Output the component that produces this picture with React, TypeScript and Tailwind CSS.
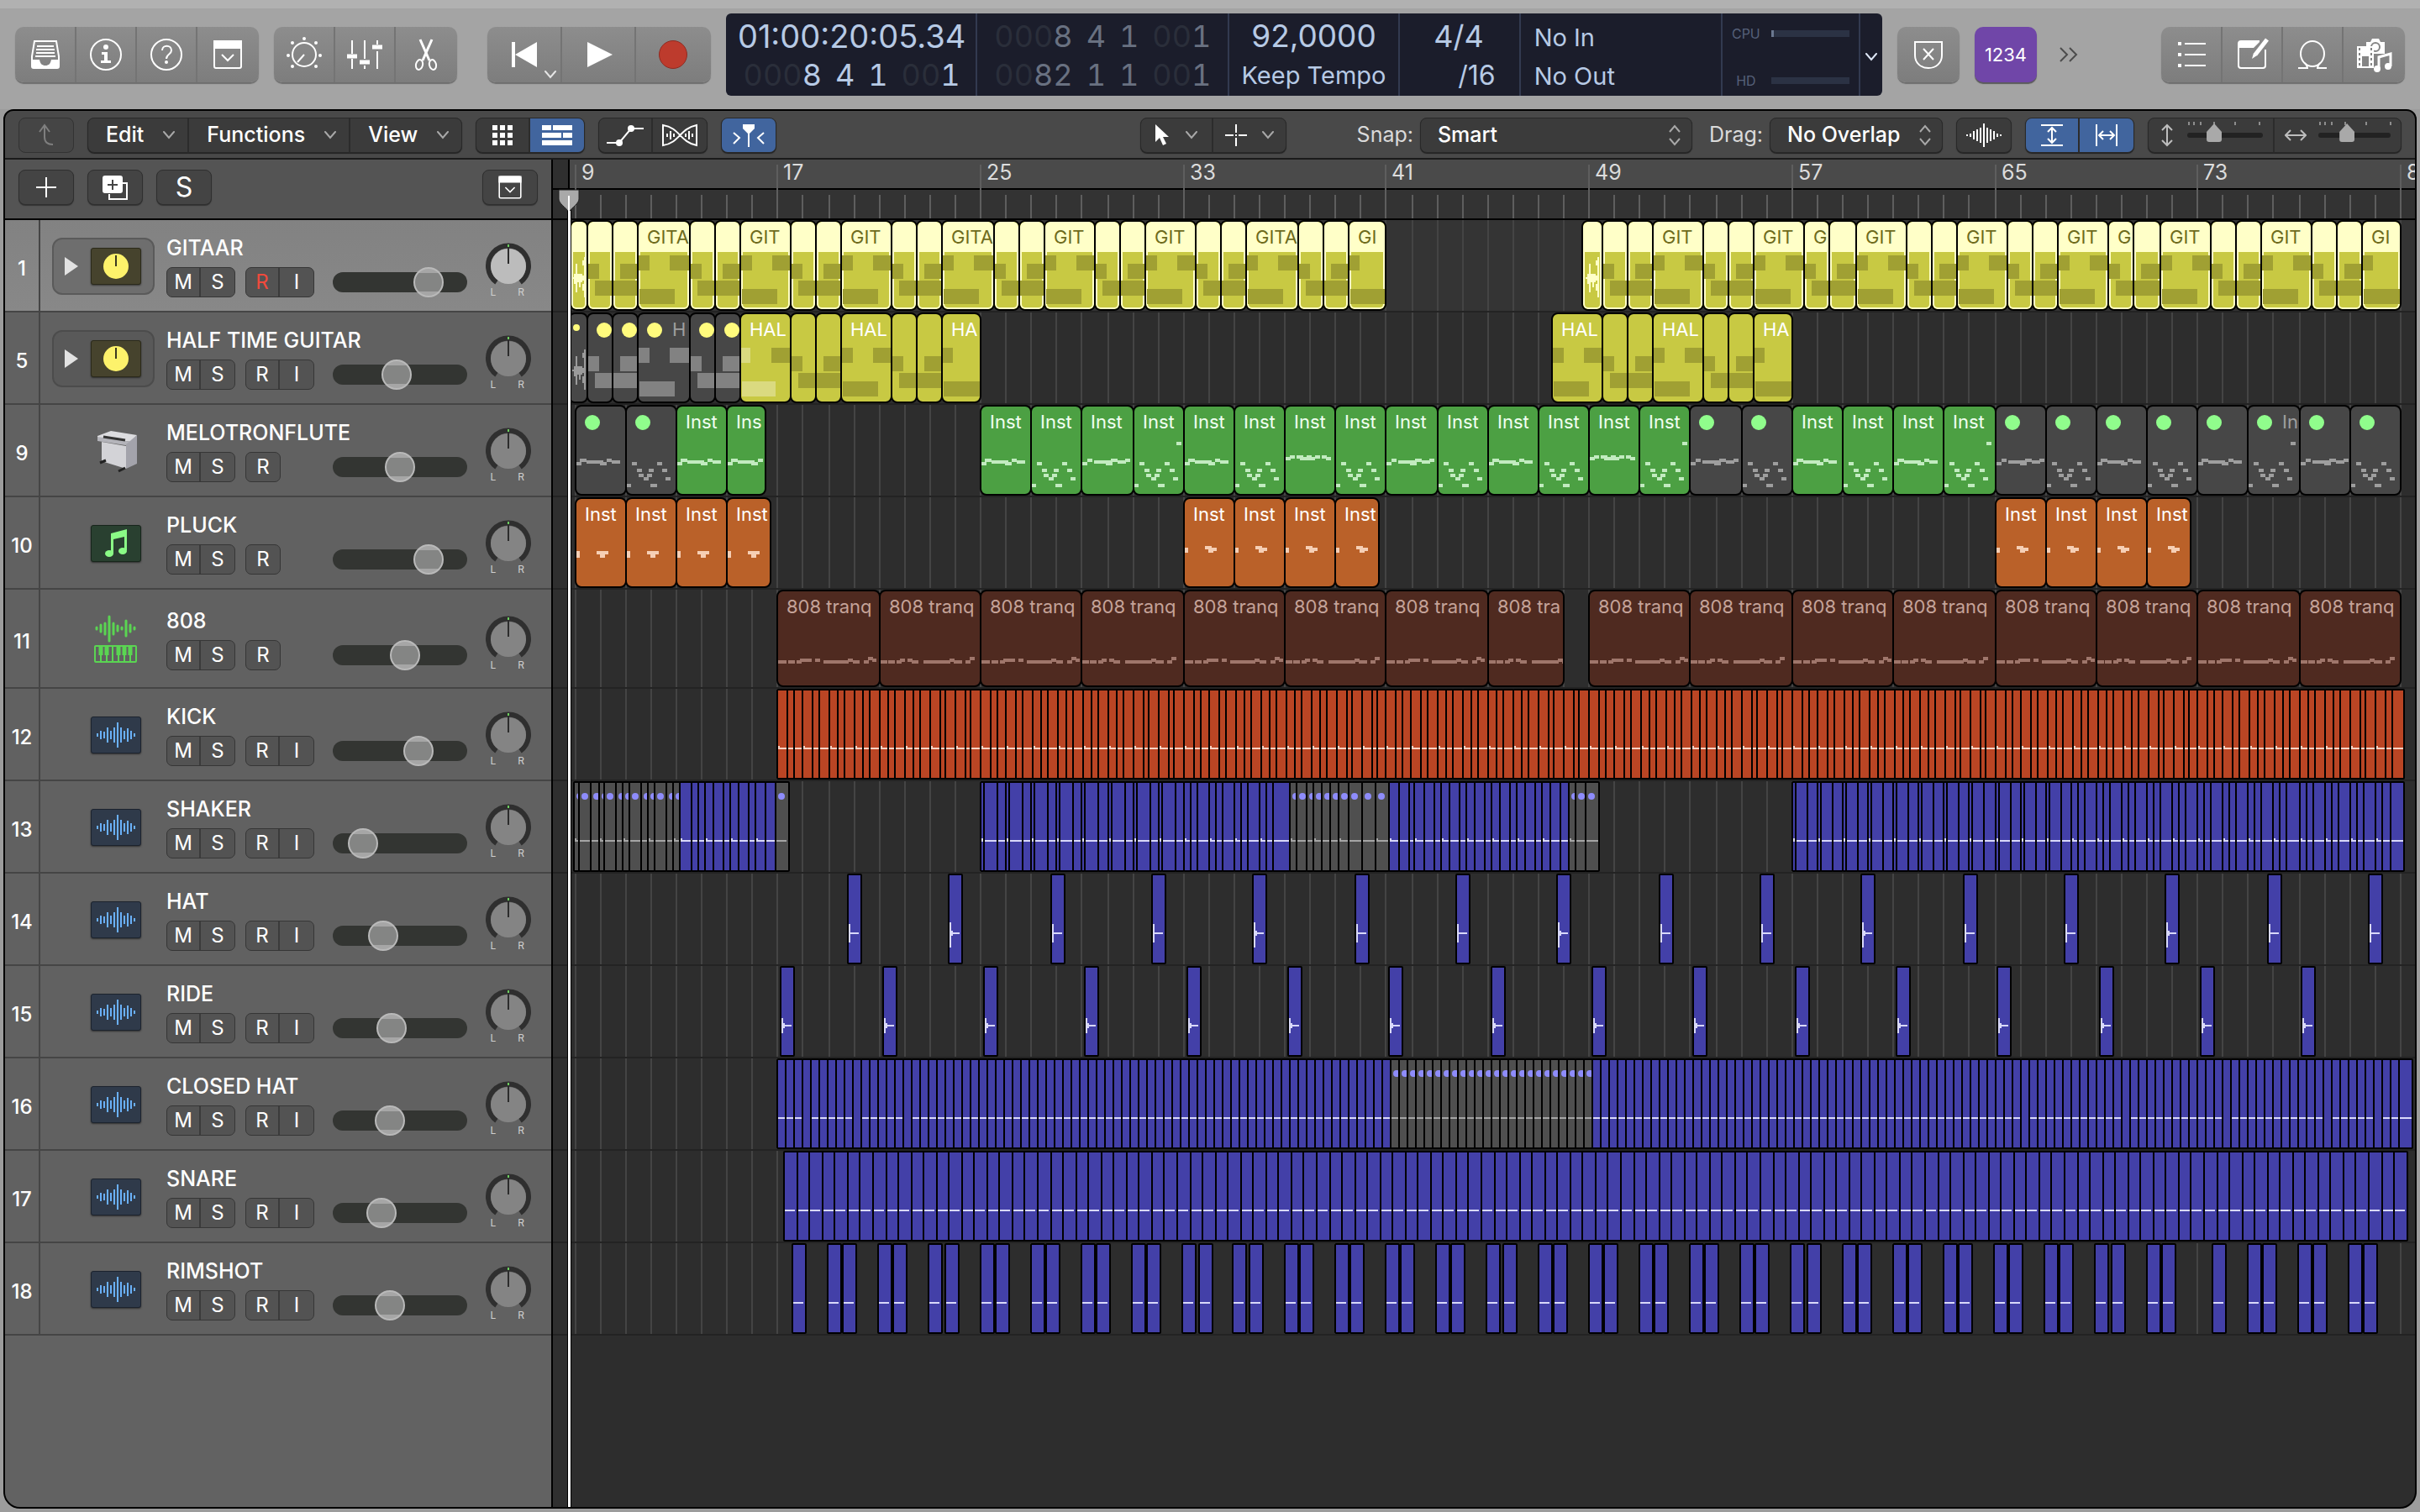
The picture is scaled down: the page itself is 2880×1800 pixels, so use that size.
import type { CSSProperties, ReactNode } from 'react'
import { clsx } from 'clsx'

type Note = [x: number, y: number, w: number, h: number]
type Tone = 'selected' | 'yellow' | 'green' | 'orange' | 'brown' | 'muted'
type Clip = { from: number; to: number; tone: Tone; label?: string; dot?: string; smallDot?: boolean; notes: Note[]; noteColor: string }
type SliceTone = 'red' | 'blue' | 'gray'
type Slice = { x: number; end: number; tone: SliceTone; wave?: 'line' | 'short' | 'hat' | 'hatTall' | 'ride' | 'none'; hit?: boolean }

const BAR = 30.172

// bar number -> x in the lane, snapped to the 2px grid
const px = (bar: number) => 2 * Math.round((5.41 + (bar - 9) * BAR) / 2)
const range = (n: number) => Array.from({ length: n }, (_, i) => i)

const END = 9999

/* ---------- clips ---------- */

const RIFF: Note[][] = [
  [[1, 52, 13, 18], [9, 72, END, 18]],
  [[9, 52, END, 18], [0, 72, END, 18]],
  [[1, 42, 13, 18], [38, 42, END, 18], [2, 82, 42, 18]],
]
const RIFF_END: Note[] = [[1, 42, 12, 18], [2, 82, END, 18]]
const AUDIO: Note[] = [
  [0, 68, 16, 2], [4, 52, 2, 34], [2, 64, 4, 12], [6, 64, 6, 10], [8, 72, 2, 8], [12, 66, 2, 6], [14, 44, 2, 48], [12, 48, 2, 6], [12, 76, 2, 8],
]

function riff(from: number, to: number, tone: Tone, noteColor: string, labels: Record<number, string>, dot?: string): Clip[] {
  const out: Clip[] = []
  const steps = [1, 1, 2]
  let bar = from
  let i = Math.abs(from % 4 - 3.5) < 0.1 ? 2 : 0
  while (bar < to) {
    const end = Math.min(bar + steps[i % 3], to)
    const cut = steps[i % 3] === 2 && end - bar < 2
    out.push({ from: bar, to: end, tone, label: labels[bar], noteColor, notes: cut ? RIFF_END : RIFF[i % 3], dot })
    bar = end
    i++
  }
  return out
}

const OLIVE = '#a0a033'
const GITAAR: Clip[] = [
  { from: 8.8, to: 9.5, tone: 'selected', notes: AUDIO.map(([x, y, w, h]) => [x + 2, y, w, h] as Note), noteColor: '#ffffc8' },
  ...riff(9.5, 41, 'selected', OLIVE, { 11.5: 'GITA', 15.5: 'GIT', 19.5: 'GIT', 23.5: 'GITA', 27.5: 'GIT', 31.5: 'GIT', 35.5: 'GITA', 39.5: 'GI' }),
  { from: 48.75, to: 49.5, tone: 'selected', notes: AUDIO.map(([x, y, w, h]) => [x + 4, y, w, h] as Note), noteColor: '#ffffc8' },
  ...riff(49.5, 81, 'selected', OLIVE, {
    51.5: 'GIT', 55.5: 'GIT', 57.5: 'G', 59.5: 'GIT', 63.5: 'GIT', 67.5: 'GIT', 69.5: 'G', 71.5: 'GIT', 75.5: 'GIT', 79.5: 'GI',
  }),
]

const HALF_TIME: Clip[] = [
  { from: 8.74, to: 9.5, tone: 'muted', notes: AUDIO.map(([x, y, w, h]) => [x + 4, y, w, h] as Note), noteColor: '#9b9b9b', dot: '#fffb7d', smallDot: true },
  ...riff(9.5, 15.5, 'muted', '#828282', { 11.5: 'H' }, '#fffb7d'),
  { from: 15.5, to: 17.5, tone: 'yellow', label: 'HAL', notes: [[1, 42, 11, 18], [2, 82, 40, 18]], noteColor: '#dada80' },
  ...riff(17.5, 25, 'yellow', OLIVE, { 19.5: 'HAL', 23.5: 'HA' }),
  ...riff(47.5, 57, 'yellow', OLIVE, { 47.5: 'HAL', 51.5: 'HAL', 55.5: 'HA' }),
]

const LINE: Note[] = [[1, 68, 6, 4], [5, 64, 8, 4], [13, 66, 20, 4], [29, 68, 8, 4], [37, 64, 6, 4], [43, 66, 10, 4]]
const LINE_UP: Note[] = [[1, 68, 6, 4], [7, 64, 6, 4], [15, 66, 20, 4], [29, 68, 8, 4], [35, 64, 8, 4], [43, 66, 10, 4], [52, 64, 6, 4]]
const HIGH: Note[] = [[1, 62, 6, 4], [6, 60, 6, 4], [14, 60, 8, 4], [18, 62, 18, 4], [26, 60, 6, 4], [36, 60, 6, 4], [44, 60, 6, 4], [49, 62, 6, 4]]
const SCATTER: Note[] = [
  [1, 94, 5, 4], [7, 68, 6, 4], [13, 76, 6, 4], [15, 82, 6, 4], [21, 86, 6, 4], [25, 82, 6, 4], [27, 76, 6, 4], [29, 94, 8, 4], [37, 68, 6, 4], [43, 76, 6, 4], [47, 86, 6, 4],
]
const SCATTER_TOP: Note[] = [...SCATTER, [51, 44, 6, 4]]

function flute(bar: number): Clip {
  const muted = bar < 13 || bar === 53 || bar === 55 || bar >= 65
  const odd = (bar - 9) % 4 === 2 && bar !== 15
  let notes = odd ? SCATTER : LINE
  if (bar === 31 || bar === 51 || bar === 63 || bar === 75) notes = SCATTER_TOP
  if (bar === 37 || bar === 49) notes = HIGH
  if (bar === 29 || bar === 41 || bar === 53 || bar === 65 || bar === 77) notes = LINE_UP
  if (bar === 15) notes = LINE.slice(0, 5)
  return {
    from: bar,
    to: bar === 15 ? 16.5 : bar + 2,
    tone: muted ? 'muted' : 'green',
    label: muted ? (bar === 75 ? 'In' : undefined) : bar === 15 ? 'Ins' : 'Inst',
    dot: muted ? '#90fd8c' : undefined,
    notes,
    noteColor: muted ? '#9e9e9e' : '#c2ebc0',
  }
}
const FLUTE: Clip[] = [9, 11, 13, 15, ...range(28).map((i) => 25 + i * 2)].map(flute)

const PLUCK_LOW: Note[] = [[1, 64, 4, 8], [25, 64, 14, 4], [29, 68, 6, 4]]
const PLUCK_HIGH: Note[] = [[1, 60, 4, 6], [25, 58, 8, 4], [29, 60, 10, 4], [29, 62, 6, 4]]
const PLUCK: Clip[] = [9, 33, 65].flatMap((start) =>
  range(4).map((i): Clip => ({
    from: start + i * 2,
    to: start + i * 2 + (i === 3 ? 1.7 : 2),
    tone: 'orange',
    label: 'Inst',
    notes: start === 9 ? PLUCK_LOW : PLUCK_HIGH,
    noteColor: '#f6cfb5',
  })),
)

const BASS_A: Note[] = [
  [1, 84, 10, 4], [13, 84, 8, 4], [23, 84, 6, 4], [27, 82, 14, 4], [45, 82, 6, 4], [55, 84, 30, 4], [84, 82, 6, 4], [90, 84, 8, 4], [103, 84, 6, 4], [108, 80, 6, 4], [113, 82, 5, 4],
]
const BASS_B: Note[] = [
  [1, 84, 8, 4], [10, 84, 8, 4], [20, 84, 6, 4], [24, 82, 6, 4], [33, 82, 6, 4], [38, 84, 8, 4], [52, 84, 32, 4], [83, 82, 6, 4], [88, 84, 10, 4], [102, 84, 6, 4], [107, 80, 6, 4],
]
const BASS: Clip[] = range(16).map((i) => ({
  from: 17 + i * 4,
  to: i === 7 ? 48 : 21 + i * 4,
  tone: 'brown',
  label: i === 7 ? '808 tra' : '808 tranq',
  notes: i % 2 ? BASS_B : BASS_A,
  noteColor: '#9f766b',
}))

/* ---------- one-shot slices ---------- */

const chain = (edges: number[], tone: SliceTone, wave: Slice['wave'] = 'line'): Slice[] =>
  edges.slice(0, -1).map((x, i) => ({ x, end: edges[i + 1], tone, wave, hit: i % 3 === 0 }))

const KICK_STEPS = [0, 12, 20, 30, 42, 50, 62, 72, 80, 92, 102, 110, 122, 132, 140, 152, 162, 170, 182, 194, 200, 212, 224, 230]
const LANE_END = 2182
const KICK = chain(
  [...range(8).flatMap((k) => KICK_STEPS.map((s) => px(17 + k * 8) + s)), px(81) - 10].filter((x, i, a) => i === a.length - 1 || x < px(81) - 16).concat(LANE_END),
  'red',
)

const bars = (from: number, to: number, steps: number[]) => range(to - from).flatMap((i) => steps.map((s) => px(from + i) + s))
const SHAKER: Slice[] = [
  ...chain([4, 10, 24, 34, 40, 54, 62, 70, 84, 92, 100, 114, 122, 130], 'gray'),
  ...chain([130, 144, 152, 160, 170, 182, 190, 200, 212, 220, 232, 244], 'blue'),
  ...chain([244, 260], 'gray', 'short'),
  ...chain([...bars(25, 33, [0, 4, 20]), ...bars(33, 37, [0, 8, 16]), 856], 'blue'),
  ...chain([856, 864, 876, 884, 894, 904, 914, 926, 942, 958, 974], 'gray'),
  ...chain([974, 986, 998, 1004, 1016, 1028, 1036, 1046, 1058, 1066, 1076, 1088, 1096, 1106, 1118, 1126, 1136, 1148, 1156, 1166, 1178, 1188], 'blue'),
  ...chain([1188, 1196, 1208, 1224], 'gray'),
  ...chain([...bars(57, 68, [0, 4, 18]), ...bars(68, 80, [0, 8, 16]), px(80), px(80) + 8, LANE_END - 16, LANE_END], 'blue'),
]

const HAT: Slice[] = range(16).map((k) => ({ x: px(19.75 + k * 4), end: px(19.75 + k * 4) + 16, tone: 'blue', wave: k % 3 === 1 ? 'hatTall' : 'hat' }))
const RIDE: Slice[] = range(16).map((k) => ({ x: px(17.125 + k * 4), end: px(17.125 + k * 4) + 16, tone: 'blue', wave: 'ride' }))

const SILENT = [3, 9, 15, 148, 160, 172, 184, 190]
const CLOSED_HAT: Slice[] = range(194).map((n) => ({
  x: 246 + n * 10,
  end: n === 193 ? 2192 : 256 + n * 10,
  tone: n >= 73 && n < 97 ? 'gray' : 'blue',
  wave: SILENT.includes(n) ? 'none' : 'line',
}))

const SNARE: Slice[] = range(128).map((k) => {
  const bar = 17.25 + k / 2
  return { x: px(bar), end: k === 127 ? px(bar) + 16 : px(bar + 0.5), tone: 'blue', wave: 'short' }
})

const RIM_BARS = [17.58, ...range(31).flatMap((k) => (19 + k * 2 === 73 ? [73.58] : [18.97 + k * 2, 19.58 + k * 2]))]
const RIMSHOT: Slice[] = RIM_BARS.map((b) => ({ x: px(b), end: px(b) + 16, tone: 'blue', wave: 'short' }))

/* ---------- tracks ---------- */

type Track = { no: number; name: string; icon: 'stack' | 'flute' | 'note' | 'sampler' | 'audio'; volume: number; input?: boolean; clips?: Clip[]; slices?: Slice[] }

const TRACKS: Track[] = [
  { no: 1, name: 'GITAAR', icon: 'stack', volume: 96, input: true, clips: GITAAR },
  { no: 5, name: 'HALF TIME GUITAR', icon: 'stack', volume: 58, input: true, clips: HALF_TIME },
  { no: 9, name: 'MELOTRONFLUTE', icon: 'flute', volume: 62, clips: FLUTE },
  { no: 10, name: 'PLUCK', icon: 'note', volume: 96, clips: PLUCK },
  { no: 11, name: '808', icon: 'sampler', volume: 68, clips: BASS },
  { no: 12, name: 'KICK', icon: 'audio', volume: 84, input: true, slices: KICK },
  { no: 13, name: 'SHAKER', icon: 'audio', volume: 18, input: true, slices: SHAKER },
  { no: 14, name: 'HAT', icon: 'audio', volume: 42, input: true, slices: HAT },
  { no: 15, name: 'RIDE', icon: 'audio', volume: 52, input: true, slices: RIDE },
  { no: 16, name: 'CLOSED HAT', icon: 'audio', volume: 50, input: true, slices: CLOSED_HAT },
  { no: 17, name: 'SNARE', icon: 'audio', volume: 40, input: true, slices: SNARE },
  { no: 18, name: 'RIMSHOT', icon: 'audio', volume: 50, input: true, slices: RIMSHOT },
]

const rowHeight = (t: Track) => (t.icon === 'sampler' ? 'h-[118px]' : 'h-[110px]')

/* ---------- icons ---------- */

function Icon({ children, size = 40, className }: { children: ReactNode; size?: number; className?: string }) {
  return (
    <svg width={size} height={size} viewBox={`0 0 ${size} ${size}`} fill="none" stroke="currentColor" strokeWidth="2" className={className} aria-hidden="true">
      {children}
    </svg>
  )
}

const Chevron = ({ className }: { className?: string }) => (
  <svg width="16" height="10" viewBox="0 0 16 10" fill="none" stroke="currentColor" strokeWidth="2" strokeLinecap="round" className={className} aria-hidden="true">
    <path d="M2 1l6 7 6-7" />
  </svg>
)

const UpDown = () => (
  <svg width="14" height="26" viewBox="0 0 14 26" fill="none" stroke="#a8a8a8" strokeWidth="2" className="pointer-events-none absolute right-[14px] top-[8px]" aria-hidden="true">
    <path d="M1 9l6-7 6 7M1 17l6 7 6-7" />
  </svg>
)

const TrayIcon = () => (
  <Icon>
    <path d="M7 4H33L36 22V34a2 2 0 0 1-2 2H6a2 2 0 0 1-2-2V22Z" />
    <path d="M10 10h20M9 14h22M9 18h22M8 22h24" />
    <path d="M4 26h9c1 5 3 7 7 7s6-2 7-7h9v9H4Z" fill="currentColor" stroke="none" />
  </Icon>
)
const InfoIcon = () => (
  <Icon>
    <circle cx="20" cy="20" r="18" />
    <circle cx="20" cy="11" r="3" fill="currentColor" stroke="none" />
    <path d="M15 17h7v10h4v3H14v-3h4v-7h-3Z" fill="currentColor" stroke="none" />
  </Icon>
)
const HelpIcon = () => (
  <Icon>
    <circle cx="20" cy="20" r="18" />
    <path d="M15 15c0-7 11-7 11 0 0 5-6 4-6 10" />
    <circle cx="20" cy="29" r="2" fill="currentColor" stroke="none" />
  </Icon>
)
const PanelIcon = ({ size = 40 }: { size?: number }) => (
  <svg width={size} height={size} viewBox="0 0 40 40" fill="none" stroke="currentColor" strokeWidth="2" aria-hidden="true">
    <rect x="4" y="4" width="32" height="32" rx="2" />
    <path d="M4 4h32v8H4Z" fill="currentColor" />
    <path d="M13 20l7 7 7-7" />
  </svg>
)
const DialIcon = () => (
  <Icon size={44}>
    <circle cx="22" cy="22" r="14" />
    <path d="M22 22l-8 9" />
    <g fill="currentColor" stroke="none">
      <circle cx="22" cy="3" r="2" /><circle cx="8" cy="8" r="2" /><circle cx="36" cy="8" r="2" /><circle cx="3" cy="23" r="2" />
      <circle cx="41" cy="23" r="2" /><circle cx="8" cy="36" r="2" /><circle cx="36" cy="36" r="2" />
    </g>
  </Icon>
)
const MixerIcon = () => (
  <Icon size={44}>
    <path d="M7 5v16M7 27v12M22 5v22M22 35v4M37 5v5M37 18v21" />
    <path d="M1 24h12M16 31h12M31 13h12" strokeWidth="5" />
  </Icon>
)
const ScissorsIcon = () => (
  <Icon>
    <path d="M13 2l11 25M27 2L16 27" strokeWidth="3" />
    <ellipse cx="12" cy="32" rx="4" ry="6" transform="rotate(14 12 32)" />
    <ellipse cx="28" cy="32" rx="4" ry="6" transform="rotate(-14 28 32)" />
  </Icon>
)
const WaveIcon = ({ color, bars: heights, gap = 4 }: { color: string; bars: number[]; gap?: number }) => (
  <svg width={heights.length * gap} height="34" viewBox={`0 0 ${heights.length * gap} 34`} stroke={color} strokeWidth="2" aria-hidden="true">
    {heights.map((h, i) => (
      <path key={i} d={`M${i * gap + gap / 2} ${17 - h / 2}v${h}`} />
    ))}
  </svg>
)

function TrackIcon({ kind }: { kind: Track['icon'] }) {
  if (kind === 'stack')
    return (
      <span className="flex h-[44px] w-[60px] items-center justify-center rounded-[3px] border border-[#2b2a1a] bg-[#46432d] shadow-[0_1px_2px_rgba(0,0,0,0.5)]">
        <svg width="30" height="30" viewBox="0 0 30 30" aria-hidden="true">
          <circle cx="15" cy="15" r="15" fill="#fdf26b" />
          <path d="M15 2v13" stroke="#3b3820" strokeWidth="2" />
        </svg>
      </span>
    )
  if (kind === 'note')
    return (
      <span className="flex h-[44px] w-[60px] items-center justify-center rounded-[3px] border border-[#17251b] bg-[#294030] shadow-[0_1px_2px_rgba(0,0,0,0.5)]">
        <svg width="28" height="36" viewBox="0 0 28 36" fill="#8afa86" aria-hidden="true">
          <path d="M8 6L27 1V26H24V10L11 13V30H8Z" />
          <ellipse cx="6" cy="30" rx="5" ry="4" />
          <ellipse cx="22" cy="27" rx="5" ry="4" />
        </svg>
      </span>
    )
  if (kind === 'audio')
    return (
      <span className="flex h-[44px] w-[60px] items-center justify-center rounded-[3px] border border-[#1c232e] bg-[#2f3a4a] shadow-[0_1px_2px_rgba(0,0,0,0.5)]">
        <WaveIcon color="#6ab0f8" bars={[4, 10, 8, 18, 10, 18, 30, 18, 10, 16, 10, 4]} />
      </span>
    )
  if (kind === 'sampler')
    return (
      <svg width="60" height="58" viewBox="0 0 60 58" aria-hidden="true">
        <g stroke="#5ad552" strokeWidth="3" strokeLinecap="round">
          <path d="M7 15v2M12 12v8M17 10v13M22 2v29M27 10v13M32 13v6M37 15v2M42 7v18M47 12v8M52 15v2" />
        </g>
        <rect x="5" y="37" width="49" height="19" rx="1" fill="none" stroke="#5ad552" strokeWidth="2" />
        <path d="M12 37v19M19 37v19M26 37v19M33 37v19M40 37v19M47 37v19" stroke="#5ad552" strokeWidth="2" />
        <path d="M12 37v11M19 37v11M33 37v11M40 37v11M47 37v11" stroke="#5ad552" strokeWidth="5" />
      </svg>
    )
  return (
    <svg width="60" height="56" viewBox="0 0 60 56" aria-hidden="true">
      <path d="M8 10L24 4 55 9 48 17 8 12Z" fill="#dcdcdf" />
      <path d="M8 11L48 17V22L8 16Z" fill="#b4b4ba" />
      <path d="M15 11l26 4" stroke="#333" strokeWidth="3" />
      <path d="M13 17L42 22V49L13 40Z" fill="#d3d3d7" />
      <path d="M42 20L55 9V43L42 49Z" fill="#a3a3ab" />
      <path d="M11 42l7-3M33 52l8-4" stroke="#222" strokeWidth="3" />
    </svg>
  )
}

/* ---------- control bar ---------- */

function Group({ children }: { children: ReactNode }) {
  return <div className="flex h-[66px] shrink-0 divide-x-2 divide-[#747474] overflow-hidden rounded-[10px] bg-linear-to-b from-[#8d8d8d] to-[#7d7d7d] px-px shadow-[0_2px_1px_#6e6e6e]">{children}</div>
}

function BarButton({ label, wide, children }: { label: string; wide?: boolean; children: ReactNode }) {
  return (
    <button type="button" aria-label={label} className={clsx('relative flex h-full items-center justify-center text-white', wide ? 'w-[88px]' : 'w-[72px]')}>
      {children}
    </button>
  )
}

function Locator({ bars: b, bright }: { bars: [string, string]; bright?: boolean }) {
  return (
    <div className={clsx('flex w-[258px] justify-between text-[36px] leading-[46px] tabular-nums', bright ? 'text-[#b7cae5]' : 'text-[#697181]')}>
      <span><span className="text-[#2a2e3a]">{b[0]}</span>{b[1]}</span>
      <span>{bright || b[0] === '000' ? '4' : '1'}</span>
      <span>1</span>
      <span><span className="text-[#2a2e3a]">00</span>1</span>
    </div>
  )
}

function Meter({ name, level }: { name: string; level?: boolean }) {
  return (
    <div className="flex items-center gap-[12px] text-[16px] leading-[24px] text-[#56617a]">
      <span className="w-[36px] text-center">{name}</span>
      <span className="h-[8px] flex-1 bg-[#2b3244]">{level && <span className="block h-full w-[3px] bg-[#6b7890]" />}</span>
    </div>
  )
}

function Display() {
  return (
    <section aria-label="LCD" className="grid h-[98px] flex-1 grid-cols-[299fr_300fr_202fr_144fr_240fr_164fr_26fr] divide-x-2 divide-[#323a50] overflow-hidden rounded-[6px] bg-[#1b1d2b] whitespace-nowrap text-[#b7cae5]">
      <div className="flex flex-col items-center py-[4px] pl-[2px]">
        <div className="text-[38px] leading-[46px]">01:00:20:05.34</div>
        <Locator bars={['000', '8']} bright />
      </div>
      <div className="flex flex-col items-center py-[4px]">
        <Locator bars={['000', '8']} />
        <Locator bars={['00', '82']} />
      </div>
      <div className="flex flex-col items-center py-[4px]">
        <div className="text-[37px] leading-[46px]">92,0000</div>
        <div className="text-[29px] leading-[48px]">Keep Tempo</div>
      </div>
      <div className="flex flex-col items-end py-[4px] pr-[28px]">
        <div className="pr-[14px] text-[36px] leading-[46px]">4/4</div>
        <div className="text-[32px] leading-[48px]">/16</div>
      </div>
      <div className="flex flex-col py-[6px] pl-[16px] text-[29px] leading-[46px]">
        <div>No In</div>
        <div>No Out</div>
      </div>
      <div className="flex flex-col justify-between py-[12px] pr-[11px] pl-[10px]">
        <Meter name="CPU" level />
        <Meter name="HD" />
      </div>
      <button type="button" aria-label="Display mode" className="flex items-center justify-center text-[#dde6f5]">
        <Chevron />
      </button>
    </section>
  )
}

function ControlBar() {
  return (
    <header className="border-t-[10px] border-[#b1b1b1] bg-[#a4a4a4]">
      <div className="flex h-[120px] items-center gap-[18px] px-[18px] pb-[10px]">
        <Group>
          <BarButton label="Library"><TrayIcon /></BarButton>
          <BarButton label="Inspector"><InfoIcon /></BarButton>
          <BarButton label="Quick Help"><HelpIcon /></BarButton>
          <BarButton label="Toolbar"><PanelIcon /></BarButton>
        </Group>
        <Group>
          <BarButton label="Smart Controls"><DialIcon /></BarButton>
          <BarButton label="Mixer"><MixerIcon /></BarButton>
          <BarButton label="Editors"><ScissorsIcon /></BarButton>
        </Group>
        <div className="ml-[18px]">
          <Group>
            <BarButton label="Go to Beginning" wide>
              <svg width="32" height="32" viewBox="0 0 32 32" fill="currentColor" aria-hidden="true"><path d="M1 1h4v30H1ZM31 1v30L5 16Z" /></svg>
              <Chevron className="absolute right-[4px] bottom-[4px] text-[#e5e5e5]" />
            </BarButton>
            <BarButton label="Play" wide>
              <svg width="36" height="32" viewBox="0 0 36 32" fill="currentColor" aria-hidden="true"><path d="M5 1v30L35 16Z" /></svg>
            </BarButton>
            <BarButton label="Record" wide>
              <span className="h-[34px] w-[34px] rounded-full border border-[#8e2c22] bg-[#bd3b2d]" />
            </BarButton>
          </Group>
        </div>
        <Display />
        <Group>
          <BarButton label="Replace">
            <Icon><path d="M4 5h32v16c0 9-7 15-16 15S4 30 4 21ZM14 13l12 13M26 13L14 26" /></Icon>
          </BarButton>
        </Group>
        <button type="button" className="h-[66px] w-[74px] shrink-0 rounded-[10px] bg-[#7046a8] text-[22px] text-white shadow-[0_2px_1px_#5b5b5b]">1234</button>
        <button type="button" aria-label="More" className="ml-[8px] text-[#4c4c4c]">
          <svg width="24" height="34" viewBox="0 0 24 34" fill="none" stroke="currentColor" strokeWidth="2" aria-hidden="true"><path d="M2 9l8 8-8 8M13 9l8 8-8 8" /></svg>
        </button>
        <div className="ml-[80px]">
          <Group>
            <BarButton label="List Editors">
              <Icon>
                <path d="M12 7h25M12 20h25M12 33h25" />
                <path d="M4 7h4M4 20h4M4 33h4" strokeWidth="4" />
              </Icon>
            </BarButton>
            <BarButton label="Note Pads">
              <Icon>
                <path d="M36 14v19a3 3 0 0 1-3 3H7a3 3 0 0 1-3-3V7a3 3 0 0 1 3-3h22" />
                <path d="M5 5h24l-7 7H5Z" fill="currentColor" stroke="none" />
                <path d="M38 2L24 20" strokeWidth="5" />
                <path d="M20 25l2-7 4 3Z" fill="currentColor" stroke="none" />
              </Icon>
            </BarButton>
            <BarButton label="Loop Browser">
              <Icon>
                <ellipse cx="20" cy="19" rx="14" ry="15" />
                <path d="M3 36h11c0-2-1-4-3-6M37 36H26c0-2 1-4 3-6" />
              </Icon>
            </BarButton>
            <BarButton label="Browsers">
              <Icon size={44}>
                <path d="M13 7h5l2-4h8l2 4h5v14H13Z" fill="currentColor" stroke="none" />
                <circle cx="24" cy="13" r="5" stroke="#858585" />
                <rect x="2" y="12" width="20" height="26" fill="currentColor" stroke="none" />
                <path d="M5 14v22M19 14v22" stroke="#858585" strokeDasharray="3 3" />
                <path d="M8 24h8v12H8Z" fill="#858585" stroke="none" />
                <path d="M28 39V25l14-4v15" strokeWidth="3" />
                <circle cx="26" cy="39" r="3" fill="currentColor" /><circle cx="39" cy="36" r="3" fill="currentColor" />
              </Icon>
            </BarButton>
          </Group>
        </div>
      </div>
    </header>
  )
}

/* ---------- tracks area menu bar ---------- */

const box = 'flex h-[42px] shrink-0 divide-x-2 divide-[#2c2c2c] overflow-hidden rounded-[8px] border border-[#292929] bg-[#3b3b3b] text-white shadow-[0_1px_1px_#222]'

function Tool({ label, on, children }: { label: string; on?: boolean; children: ReactNode }) {
  return (
    <button type="button" aria-label={label} aria-pressed={on} className={clsx('flex h-full w-[64px] items-center justify-center', on && 'bg-[#41659e]')}>
      {children}
    </button>
  )
}

function Menu({ label }: { label: string }) {
  return (
    <button type="button" className="flex h-full items-center gap-[22px] pr-[14px] pl-[21px] text-[25px] font-medium">
      {label}
      <Chevron className="text-[#a8a8a8]" />
    </button>
  )
}

function Zoom({ label, value, children }: { label: string; value: number; children: ReactNode }) {
  return (
    <label className="flex h-full w-[150px] items-center gap-[14px] px-[12px] text-[#bdbdbd]">
      {children}
      <span className="relative flex h-full flex-1 items-center">
        <svg width="88" height="4" className="absolute top-[4px] left-0" stroke="#8d8d8d" strokeWidth="2" aria-hidden="true">
          <path d="M2 0v4M8 0v4M16 0v4M32 0v4M57 0v4M86 0v4" />
        </svg>
        <input
          type="range"
          aria-label={label}
          defaultValue={value}
          className="h-[24px] w-full appearance-none bg-transparent [&::-webkit-slider-runnable-track]:h-[6px] [&::-webkit-slider-runnable-track]:rounded-full [&::-webkit-slider-runnable-track]:bg-[#222] [&::-webkit-slider-thumb]:-mt-[11px] [&::-webkit-slider-thumb]:h-[22px] [&::-webkit-slider-thumb]:w-[18px] [&::-webkit-slider-thumb]:appearance-none [&::-webkit-slider-thumb]:rounded-b-[3px] [&::-webkit-slider-thumb]:bg-[#a9a9a9] [&::-webkit-slider-thumb]:[clip-path:polygon(50%_0,100%_45%,100%_100%,0_100%,0_45%)]"
        />
      </span>
    </label>
  )
}

function MenuBar() {
  return (
    <div className="flex h-[58px] shrink-0 items-center border-b-2 border-[#1b1b1b] bg-[#494949] px-[16px] pt-[2px] text-[25px] text-white">
      <button type="button" aria-label="Leave folder" className="flex h-[42px] w-[66px] shrink-0 items-center justify-center rounded-[8px] border border-[#333] bg-[#454545] text-[#7f7f7f]">
        <Icon size={30}><path d="M7 11l6-8 6 8M13 3v14c0 6 4 9 10 9" /></Icon>
      </button>
      <div className={clsx(box, 'ml-[16px]')}>
        <Menu label="Edit" />
        <Menu label="Functions" />
        <Menu label="View" />
      </div>
      <div className={clsx(box, 'ml-[16px]')}>
        <Tool label="Live Loops">
          <svg width="26" height="26" viewBox="0 0 26 26" fill="currentColor" aria-hidden="true">
            {range(9).map((i) => <rect key={i} x={(i % 3) * 9 + 1} y={Math.floor(i / 3) * 9 + 1} width="6" height="6" />)}
          </svg>
        </Tool>
        <Tool label="Tracks view" on>
          <svg width="36" height="26" viewBox="0 0 36 26" fill="currentColor" aria-hidden="true">
            <path d="M0 1h11v6H0ZM13 1h23v6H13ZM0 10h23v6H0ZM25 10h11v6H25ZM0 19h36v6H0Z" />
          </svg>
        </Tool>
      </div>
      <div className={clsx(box, 'ml-[16px]')}>
        <Tool label="Automation">
          <svg width="44" height="28" viewBox="0 0 44 28" fill="none" stroke="currentColor" strokeWidth="2" aria-hidden="true">
            <path d="M0 23h15L29 6h15" />
            <circle cx="15" cy="23" r="4" fill="currentColor" stroke="none" /><circle cx="29" cy="6" r="4" fill="currentColor" stroke="none" />
          </svg>
        </Tool>
        <Tool label="Flex">
          <svg width="42" height="28" viewBox="0 0 42 28" fill="none" stroke="currentColor" strokeWidth="2" aria-hidden="true">
            <path d="M1 2c20 3 20 20 40 24V2C21 6 21 23 1 26ZM6 12v4M10 9v10M14 12v4M28 12v4M32 9v10M36 12v4" />
          </svg>
        </Tool>
      </div>
      <div className={clsx(box, 'ml-[16px]')}>
        <Tool label="Catch playhead" on>
          <svg width="40" height="28" viewBox="0 0 40 28" fill="none" stroke="currentColor" strokeWidth="2" aria-hidden="true">
            <path d="M20 6v22M2 11l7 6-7 7M38 11l-7 6 7 7" />
            <path d="M13 1h14v5l-6 6h-2l-6-6Z" fill="currentColor" stroke="none" />
          </svg>
        </Tool>
      </div>

      <div className={clsx(box, 'ml-auto')}>
        <button type="button" aria-label="Left-click tool" className="flex w-[86px] items-center justify-center gap-[18px]">
          <svg width="18" height="28" viewBox="0 0 18 28" fill="currentColor" aria-hidden="true"><path d="M1 1v21l5-5 4 9 4-2-4-8h7Z" /></svg>
          <Chevron className="text-[#a8a8a8]" />
        </button>
        <button type="button" aria-label="Command-click tool" className="flex w-[86px] items-center justify-center gap-[16px]">
          <Icon size={28}><path d="M14 1v10M14 17v10M1 14h10M17 14h10M13 14h2" /></Icon>
          <Chevron className="text-[#a8a8a8]" />
        </button>
      </div>

      <label htmlFor="snap" className="ml-[84px] text-[#dadada]">Snap:</label>
      <div className="relative ml-[8px]">
        <select id="snap" className="h-[42px] w-[324px] appearance-none rounded-[8px] border border-[#292929] bg-[#3b3b3b] pl-[20px] font-medium shadow-[0_1px_1px_#222]">
          <option>Smart</option>
        </select>
        <UpDown />
      </div>
      <label htmlFor="drag" className="ml-[20px] text-[#dadada]">Drag:</label>
      <div className="relative ml-[8px]">
        <select id="drag" className="h-[42px] w-[206px] appearance-none rounded-[8px] border border-[#292929] bg-[#3b3b3b] pl-[20px] font-medium shadow-[0_1px_1px_#222]">
          <option>No Overlap</option>
        </select>
        <UpDown />
      </div>
      <div className={clsx(box, 'ml-[16px]')}>
        <Tool label="Waveform zoom">
          <WaveIcon color="currentColor" bars={[2, 4, 10, 14, 18, 28, 18, 14, 10, 4, 2]} />
        </Tool>
      </div>
      <div className={clsx(box, 'ml-[16px]')}>
        <Tool label="Vertical auto zoom" on>
          <Icon size={28}><path d="M1 2h26M1 26h26M14 5v18M9 10l5-5 5 5M9 18l5 5 5-5" /></Icon>
        </Tool>
        <Tool label="Horizontal auto zoom" on>
          <Icon size={28}><path d="M2 1v26M26 1v26M5 14h18M10 9l-5 5 5 5M18 9l5 5-5 5" /></Icon>
        </Tool>
      </div>
      <div className={clsx(box, 'ml-[16px]')}>
        <Zoom label="Vertical zoom" value={32}>
          <svg width="20" height="28" viewBox="0 0 20 28" fill="none" stroke="currentColor" strokeWidth="2" aria-hidden="true"><path d="M10 2v24M4 8l6-6 6 6M4 20l6 6 6-6" /></svg>
        </Zoom>
        <Zoom label="Horizontal zoom" value={37}>
          <svg width="26" height="16" viewBox="0 0 26 16" fill="none" stroke="currentColor" strokeWidth="2" aria-hidden="true"><path d="M1 8h24M7 2L1 8l6 6M19 2l6 6-6 6" /></svg>
        </Zoom>
      </div>
    </div>
  )
}

/* ---------- track headers ---------- */

function Knob({ on }: { on: boolean }) {
  return (
    <svg width="56" height="72" viewBox="0 0 56 72" aria-hidden="true">
      <path d="M14 50A24 24 0 1 1 42 50" fill="none" stroke="#2f2f2f" strokeWidth="6" />
      <circle cx="28" cy="31" r="21" fill={on ? '#bcbcbc' : '#848484'} />
      <path d="M28 6v22" stroke="#2c2c2c" strokeWidth="2" />
      <path d="M28 5v3" stroke="#6ccf5f" strokeWidth="2" />
      <text x="10" y="66" fontSize="12" textAnchor="middle" fill="#cfcfcf">L</text>
      <text x="43" y="66" fontSize="12" textAnchor="middle" fill="#cfcfcf">R</text>
    </svg>
  )
}

function Letters({ letters, armed }: { letters: string[]; armed?: boolean }) {
  return (
    <div className="flex h-[36px] divide-x-2 divide-[#3b3b3b] overflow-hidden rounded-[7px] border border-[#363636] bg-[#535353]">
      {letters.map((l) => (
        <button key={l} type="button" className={clsx('w-[40px] text-center text-[24px] leading-[34px]', l === 'R' && armed ? 'text-[#f04a3c]' : 'text-white')}>
          {l}
        </button>
      ))}
    </div>
  )
}

function TrackHeader({ track, selected }: { track: Track; selected: boolean }) {
  return (
    <div className={clsx('flex border-b-2 border-[#454545] text-white', rowHeight(track), selected ? 'bg-linear-to-b from-[#828282] to-[#888]' : 'bg-[#616161]')}>
      <div className="flex w-[42px] items-center justify-center border-r-2 border-[#454545] pt-[8px] text-[24px] font-medium">{track.no}</div>
      <div className="flex w-[136px] items-center pt-[2px] pl-[14px]">
        {track.icon === 'stack' ? (
          <div className={clsx('flex h-[68px] w-[122px] items-center justify-between rounded-[12px] border-2 pr-[14px] pl-[12px]', selected ? 'border-[#5a5a5a] bg-[#6e6e6e]' : 'border-[#4c4c4c] bg-[#595959]')}>
            <button type="button" aria-label={`Open ${track.name}`}>
              <svg width="18" height="24" viewBox="0 0 18 24" fill="#e2e2e2" aria-hidden="true"><path d="M1 1v22L17 12Z" /></svg>
            </button>
            <TrackIcon kind={track.icon} />
          </div>
        ) : (
          <div className="ml-[46px]"><TrackIcon kind={track.icon} /></div>
        )}
      </div>
      <div className="flex w-[190px] flex-col justify-center pt-[2px] pl-[14px]">
        <div className="h-[38px] text-[25px] leading-[30px] font-medium whitespace-nowrap">{track.name}</div>
        <div className="flex gap-[12px]">
          <Letters letters={['M', 'S']} />
          <Letters letters={track.input ? ['R', 'I'] : ['R']} armed={selected} />
        </div>
      </div>
      <div className="flex flex-1 flex-col justify-center pt-[40px] pl-[22px]">
        <input
          type="range"
          aria-label={`${track.name} volume`}
          max={124}
          defaultValue={track.volume}
          className="h-[36px] w-[160px] appearance-none bg-transparent [&::-webkit-slider-runnable-track]:h-[24px] [&::-webkit-slider-runnable-track]:rounded-full [&::-webkit-slider-runnable-track]:bg-[#333532] [&::-webkit-slider-thumb]:-mt-[6px] [&::-webkit-slider-thumb]:h-[36px] [&::-webkit-slider-thumb]:w-[36px] [&::-webkit-slider-thumb]:appearance-none [&::-webkit-slider-thumb]:rounded-full [&::-webkit-slider-thumb]:border-2 [&::-webkit-slider-thumb]:border-[#b9b9b9] [&::-webkit-slider-thumb]:bg-[linear-gradient(#a6a6a6_16%,#848584_16%,#848584_84%,#a6a6a6_84%)]"
        />
      </div>
      <div className="flex w-[79px] items-center pt-[12px]">
        <Knob on={selected} />
      </div>
    </div>
  )
}

/* ---------- lanes ---------- */

const toneClass: Record<Tone, string> = {
  selected: 'bg-[#c8c943] text-[#6e6b1d]',
  yellow: 'bg-[#c8c943] text-white',
  green: 'bg-[#4ca043] text-[#f0fff0]',
  orange: 'bg-[#ba6129] text-white',
  brown: 'bg-[#4f2a20] text-[#c5a399]',
  muted: 'bg-[#474747] text-[#9f9f9f]',
}

function ClipView({ clip }: { clip: Clip }) {
  const left = px(clip.from)
  const style: CSSProperties = { left, width: px(clip.to) - left + 2 }
  return (
    <div className={clsx('absolute top-0 bottom-0 overflow-hidden rounded-[8px] border-2 border-black', toneClass[clip.tone])} style={style}>
      {clip.tone === 'selected' && <div className="absolute inset-0 rounded-[6px] border-2 border-[#ffffc8]"><div className="h-[34px] bg-[#ffffc8]" /></div>}
      <svg className="absolute -top-[2px] -left-[2px] h-[118px] w-[160px]" fill={clip.noteColor} aria-hidden="true">
        {clip.notes.map(([x, y, w, h], i) => <rect key={i} x={x + 1} y={y} width={w} height={h} />)}
        {clip.tone === 'yellow' && clip.from === 15.5 && <rect x="38" y="42" width="40" height="18" fill={OLIVE} />}
      </svg>
      {clip.dot && (
        <span
          className={clsx('absolute rounded-full', clip.smallDot ? 'top-[12px] left-[4px] h-[8px] w-[8px]' : 'top-[10px] left-[10px] h-[18px] w-[18px]')}
          style={{ backgroundColor: clip.dot }}
        />
      )}
      {clip.label && <span className={clsx('absolute top-0 text-[22px] leading-[36px] whitespace-nowrap', clip.dot ? 'left-[40px]' : 'left-[10px]')}>{clip.label}</span>}
    </div>
  )
}

const sliceClass: Record<SliceTone, string> = {
  red: 'bg-[#ba4524] text-[#fbd3c4]',
  blue: 'bg-[#4340a8] text-[#d9d9fa]',
  gray: 'bg-[#4f4f4f] text-[#a5a5a5]',
}

function SliceView({ slice }: { slice: Slice }) {
  const { wave, tone } = slice
  const loose = wave === 'hat' || wave === 'hatTall' || wave === 'ride'
  return (
    <div className={clsx('absolute top-0 bottom-0 overflow-hidden rounded-[2px] border-2 border-black', sliceClass[tone])} style={{ left: slice.x, width: slice.end - slice.x + 2 }}>
      {tone === 'gray' && <span className="absolute top-[12px] left-[2px] h-[8px] w-[8px] rounded-full bg-[#8e8cfb]" />}
      {wave === 'line' && <span className="absolute inset-x-0 top-[68px] h-[2px] bg-current" />}
      {wave === 'short' && <span className="absolute top-[68px] left-0 h-[2px] w-[12px] bg-current" />}
      {slice.hit && wave === 'line' && <span className="absolute top-[66px] left-0 h-[2px] w-[2px] bg-current" />}
      {loose && (
        <svg className="absolute top-0 left-0 h-[106px] w-[14px]" fill="currentColor" aria-hidden="true">
          <rect x="0" y="68" width="12" height="2" />
          {wave === 'hat' && <rect x="0" y="58" width="2" height="22" />}
          {wave === 'hatTall' && <path d="M0 56h2v10h2v6h-2v14h-2Z" />}
          {wave === 'ride' && <path d="M0 60h2v6h2v6h-2v6h-2Z" />}
        </svg>
      )}
    </div>
  )
}

function Lane({ track, selected }: { track: Track; selected: boolean }) {
  return (
    <div className={clsx('relative overflow-hidden border-b-2 border-[#232323]', rowHeight(track), selected ? 'bg-[#343434]' : 'bg-[#2d2d2d]')}>
      {range(73).map((i) => <span key={i} className="absolute inset-y-0 w-[2px] bg-[#444]" style={{ left: px(9 + i) }} />)}
      {track.clips?.map((c, i) => <ClipView key={i} clip={c} />)}
      {track.slices?.map((s, i) => <SliceView key={i} slice={s} />)}
    </div>
  )
}

function Ruler() {
  return (
    <div className="relative h-[72px] overflow-hidden border-b-2 border-black bg-[#333]">
      <div className="h-[36px] border-b-2 border-black bg-[#4a4a4a]" />
      {range(73).map((i) => (
        <span key={i} className={clsx('absolute bottom-0 w-[2px] bg-[#5e5e5e]', i % 8 ? 'top-[42px]' : 'top-[6px]')} style={{ left: px(9 + i) }} />
      ))}
      {range(10).map((i) => (
        <span key={i} className="absolute top-0 text-[25px] leading-[30px] text-[#dcdcdc]" style={{ left: px(9 + i * 8) + 8 }}>{9 + i * 8}</span>
      ))}
    </div>
  )
}

function SquareButton({ label, children }: { label: string; children: ReactNode }) {
  return (
    <button type="button" aria-label={label} className="flex h-[42px] w-[66px] items-center justify-center rounded-[8px] border border-[#2f2f2f] bg-[#444] text-[32px] text-white shadow-[0_1px_1px_#333]">
      {children}
    </button>
  )
}

export default function App() {
  return (
    <div className="flex min-h-screen flex-col bg-[#9c9c9c] font-['Inter','Liberation_Sans',sans-serif]">
      <ControlBar />
      <main className="mx-1 mb-1 flex flex-1 flex-col overflow-hidden rounded-[12px] rounded-b-[20px] border-2 border-black bg-[#2d2d2d]">
        <MenuBar />
        <div className="flex flex-1">
          <aside className="w-[652px] shrink-0 border-r-2 border-black bg-[#626262]">
            <div className="flex h-[72px] items-center gap-[16px] border-b-2 border-black bg-[#545454] px-[16px] pb-[4px]">
              <SquareButton label="Add track"><Icon size={28}><path d="M14 2v24M2 14h24" /></Icon></SquareButton>
              <SquareButton label="Duplicate track">
                <Icon size={34}>
                  <path d="M10 25v6h21V12h-6" />
                  <rect x="3" y="4" width="22" height="19" rx="2" fill="currentColor" />
                  <path d="M14 8v12M8 14h12" stroke="#444" />
                </Icon>
              </SquareButton>
              <SquareButton label="Solo">S</SquareButton>
              <div className="ml-auto"><SquareButton label="Track options"><PanelIcon size={32} /></SquareButton></div>
            </div>
            {TRACKS.map((t, i) => <TrackHeader key={t.no} track={t} selected={i === 0} />)}
          </aside>
          <div className="w-[20px] shrink-0 border-r-2 border-black bg-[#2f2f2f]">
            <div className="h-[36px] border-b-2 border-black" />
            <div className="h-[36px] border-b-2 border-black" />
            {TRACKS.map((t) => <div key={t.no} className={clsx('border-b-2 border-[#232323]', rowHeight(t))} />)}
          </div>
          <section aria-label="Tracks" className="relative min-w-0 flex-1">
            <Ruler />
            {TRACKS.map((t, i) => <Lane key={t.no} track={t} selected={i === 0} />)}
            <div className="absolute top-[36px] bottom-0 -left-[3px] w-[5px] border-x border-black bg-white" />
            <svg width="26" height="28" viewBox="0 0 26 28" className="absolute top-[35px] -left-[14px]" aria-hidden="true">
              <path d="M1 1h24v11c0 5-8 10-12 15C9 22 1 17 1 12Z" fill="#a9a9a9" stroke="#222" />
              <path d="M13 8v20" stroke="#fff" strokeWidth="2" />
            </svg>
          </section>
        </div>
      </main>
    </div>
  )
}
